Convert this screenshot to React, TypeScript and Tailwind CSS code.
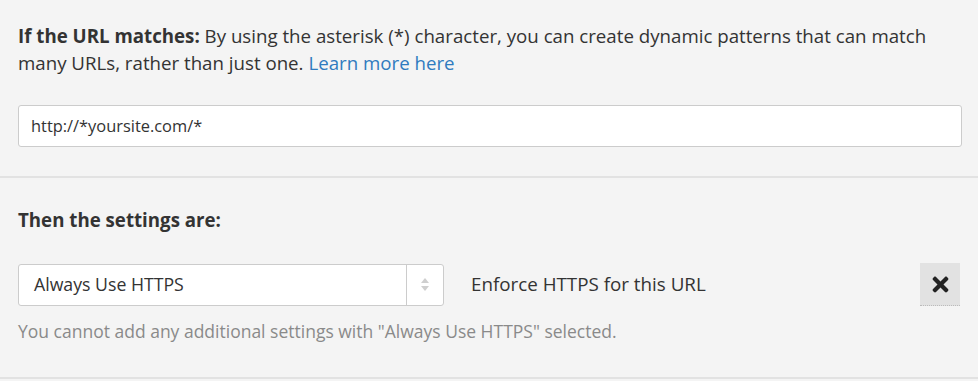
import React from "react";
import { FaTimes } from "react-icons/fa";

export default function App() {
  return (
    <div
      className="w-[978px] h-[381px] bg-[#f4f4f4] text-[#333333] overflow-hidden"
      style={{ fontFamily: '"Open Sans", "Liberation Sans", sans-serif' }}
    >
      <div className="px-[18px] pt-[22px] pb-[29px] border-b-2 border-[#e2e2e2]">
        <p className="text-[18.7px] leading-[27px]">
          <span className="font-bold">If the URL matches:</span> By using the asterisk (*) character, you can create
          dynamic patterns that can match many URLs, rather than just one.{" "}
          <a className="text-[#2f7bbf]">Learn more here</a>
        </p>
        <div className="mt-[29px] h-[42px] w-[944px] bg-white border border-[#cccccc] rounded-[3px] flex items-center pl-[12px] text-[16.4px] text-[#333]">
          http://*yoursite.com/*
        </div>
      </div>
      <div className="px-[18px] pt-[28px] pb-[34px] border-b-2 border-[#e2e2e2]">
        <h2 className="text-[18.7px] leading-[27px] font-bold">Then the settings are:</h2>
        <div className="mt-[30px] flex items-center">
          <div className="w-[426px] h-[42px] bg-white border border-[#cccccc] rounded-[3px] flex items-stretch">
            <div className="flex-1 flex items-center pl-[15px] text-[17.7px] text-[#333]">Always Use HTTPS</div>
            <div className="w-[37px] border-l border-[#cccccc] flex flex-col items-center justify-center gap-[3px]">
              <div className="w-0 h-0 border-l-[4px] border-r-[4px] border-b-[5px] border-l-transparent border-r-transparent border-b-[#cfcfcf]" />
              <div className="w-0 h-0 border-l-[4px] border-r-[4px] border-t-[5px] border-l-transparent border-r-transparent border-t-[#cfcfcf]" />
            </div>
          </div>
          <div className="ml-[27px] text-[18.8px] text-[#333]">Enforce HTTPS for this URL</div>
          <div className="ml-auto w-[40px] h-[43px] bg-[#e2e2e2] border-b border-dotted border-[#bbbbbb] flex items-center justify-center text-[#222]">
            <FaTimes size={23} />
          </div>
        </div>
        <p className="mt-[13px] text-[17.5px] leading-[24px] text-[#8a8a8a]">
          You cannot add any additional settings with "Always Use HTTPS" selected.
        </p>
      </div>
    </div>
  );
}
